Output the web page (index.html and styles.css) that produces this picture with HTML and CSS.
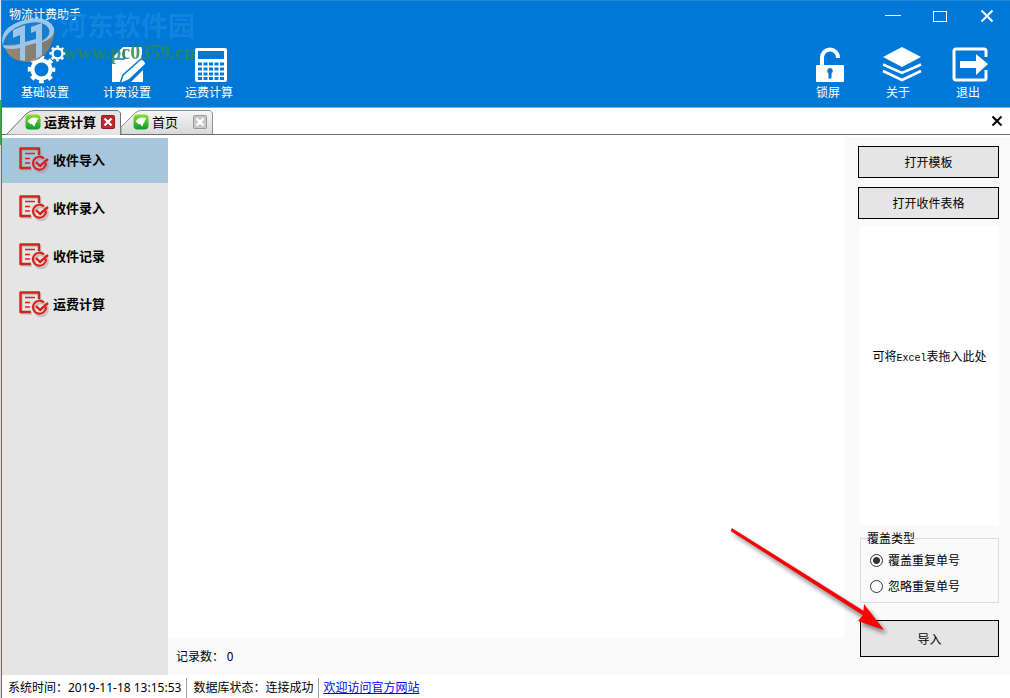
FILE: index.html
```html
<!DOCTYPE html>
<html lang="zh-CN">
<head>
<meta charset="utf-8">
<title>物流计费助手</title>
<link rel="stylesheet" href="styles.css">
</head>
<body>
<svg class="defs" aria-hidden="true">
  <defs>
    <linearGradient id="leaf" x1="0" y1="0" x2="0" y2="1"><stop offset="0" stop-color="#8be02c"/><stop offset="1" stop-color="#0a9a2a"/></linearGradient>
    <linearGradient id="idle" x1="0" y1="0" x2="0" y2="1"><stop offset="0" stop-color="#f6f6f6"/><stop offset="1" stop-color="#d9d9d9"/></linearGradient>
    <linearGradient id="brown" x1="0" y1="0" x2="1" y2="0"><stop offset="0" stop-color="#b98a5c"/><stop offset="1" stop-color="#8b7a66"/></linearGradient>
    <filter id="soft" x="-20%" y="-20%" width="140%" height="140%"><feGaussianBlur stdDeviation="2"/></filter>
    <symbol id="tab-icon" viewBox="0 0 16 16">
      <rect x="0.5" y="0.5" width="15" height="15" rx="4" fill="url(#leaf)"/>
      <path d="M2.500 7.500Q5 3.500 9 3.500Q12 3.500 13.500 4.500Q11.500 6 11.500 8Q10 9 9.500 12.500Q7.500 11 7 10H5Q4.500 8 2.500 7.500Z" fill="#fff"/>
    </symbol>
    <symbol id="form-icon" viewBox="0 0 32 28">
      <g fill="none" stroke-linejoin="round">
        <g stroke="#9a8a8a" stroke-opacity=".4" stroke-width="2.500" transform="translate(1 1.500)"><path d="M13 22H2.500V2.500H21V9"/><circle cx="22" cy="18" r="6.500"/></g>
        <path d="M13 22H2.500V2.500H21V9" stroke="#d8201f" stroke-width="2.400"/>
        <path d="M7 7.500H17M7 12.500H12M7 17H12" stroke="#d8201f" stroke-width="1.600"/>
        <path d="M26 12.500A6.500 6.500 0 1 0 28 17" stroke="#d8201f" stroke-width="2.200"/>
        <path d="M18 16L22 20L30 13" stroke="#d8201f" stroke-width="2.400"/>
      </g>
    </symbol>
  </defs>
</svg>
<div class="edge"></div>
<div class="app">
  <header class="header">
    <div class="titlebar">
      <h1 class="title">物流计费助手</h1>
      <div class="winctl">
        <button class="winbtn" aria-label="最小化"><svg width="16" height="16"><path d="M0 7.500H16" stroke="#fff"/></svg></button>
        <button class="winbtn" aria-label="最大化"><svg width="16" height="16"><rect x="1.500" y="3.500" width="13" height="10" fill="none" stroke="#fff"/></svg></button>
        <button class="winbtn" aria-label="关闭"><svg width="16" height="16"><path d="M2.500 2.500L13.500 13.500M13.500 2.500L2.500 13.500" stroke="#fff" stroke-width="2"/></svg></button>
      </div>
    </div>
    <nav class="toolbar">
      <button class="tool">
        <svg width="40" height="40" viewBox="0 0 40 40" fill="none" stroke="#fff">
          <circle cx="16.500" cy="25.500" r="9" stroke-width="4"/>
          <circle cx="16.500" cy="25.500" r="12" stroke-width="3.500" stroke-dasharray="4.700 4.725" stroke-dashoffset="2.350"/>
          <circle cx="32.500" cy="9.500" r="5" stroke-width="2.500"/>
          <circle cx="32.500" cy="9.500" r="7" stroke-width="2" stroke-dasharray="2.700 2.798" stroke-dashoffset="1.350"/>
        </svg>
        <span>基础设置</span>
      </button>
      <button class="tool">
        <svg width="40" height="40" viewBox="0 0 40 40">
          <path d="M16 3H35V19L14 38H5V14Z" fill="#fff"/><path d="M17 5V15H7" fill="none" stroke="#0078d7" stroke-width="1.500"/>
          <path d="M13 40L16 31L34 15Q38 16 39 20L22 36Z" fill="#fff" stroke="#0078d7" stroke-width="1.500"/><path d="M36 26V38H24Z" fill="#fff"/>
        </svg>
        <span>计费设置</span>
      </button>
      <button class="tool">
        <svg width="40" height="40" viewBox="0 0 40 40">
          <rect x="6" y="4" width="32" height="34" rx="2" fill="#fff"/><rect x="9" y="7" width="26" height="8" fill="#0078d7"/>
          <path d="M9 20H35M9 25H35M9 30H35M9 34.500H35" stroke="#0078d7" stroke-width="3" stroke-dasharray="4 1.500"/>
        </svg>
        <span>运费计算</span>
      </button>
      <div class="spacer"></div>
      <button class="tool narrow">
        <svg width="40" height="40" viewBox="0 0 40 40">
          <path d="M14 22V13.500A8 8 0 0 1 30 13.500V14" fill="none" stroke="#fff" stroke-width="4"/>
          <rect x="8" y="21" width="28" height="17" rx="1" fill="#fff"/><path d="M22 24a3 3 0 0 1 1.500 5.500v5h-3v-5a3 3 0 0 1 1.500-5.500Z" fill="#0078d7"/>
        </svg>
        <span>锁屏</span>
      </button>
      <button class="tool narrow">
        <svg width="40" height="40" viewBox="0 0 40 40">
          <path d="M24 3L43 13L24 23L5 13Z" fill="#fff"/>
          <path d="M5 20.500L24 29L43 20.500M5 27L24 36L43 27" fill="none" stroke="#fff" stroke-width="2.500"/>
        </svg>
        <span>关于</span>
      </button>
      <button class="tool narrow">
        <svg width="40" height="40" viewBox="0 0 40 40">
          <path d="M38 13V7Q38 5 36 5H8Q6 5 6 7V34Q6 36 8 36H36Q38 36 38 34V26" fill="none" stroke="#fff" stroke-width="3"/>
          <path d="M12 17H28V10L40 20L28 31V24H12Z" fill="#fff"/>
        </svg>
        <span>退出</span>
      </button>
    </nav>
  </header>

  <div class="tabs">
    <div class="tab active">
      <svg class="shape" width="116" height="27"><path d="M0 26.500H.5L20 6Q24 2.500 28 2.500H112L114.500 5V27" fill="#e5e5e5" stroke="#6d6d6d"/></svg>
      <button class="tabname"><svg width="16" height="16"><use href="#tab-icon"/></svg><span>运费计算</span></button>
      <button class="tabclose" aria-label="关闭运费计算"><svg width="14" height="14"><rect x=".5" y=".5" width="13" height="13" rx="1" fill="#c0282d" stroke="#8c1c20"/><path d="M3.500 3.500L10.500 10.500M10.500 3.500L3.500 10.500" stroke="#fff" stroke-width="2.200"/></svg></button>
    </div>
    <div class="tab">
      <svg class="shape" width="92" height="27"><path d="M0 26V19L14 5Q17 2.500 20 2.500H89L91.500 5V26" fill="url(#idle)" stroke="#8f8f8f"/></svg>
      <button class="tabname"><svg width="16" height="16"><use href="#tab-icon"/></svg><span>首页</span></button>
      <button class="tabclose" aria-label="关闭首页"><svg width="14" height="14"><rect x=".5" y=".5" width="13" height="13" rx="1" fill="#c8c8c8" stroke="#999"/><path d="M3.500 3.500L10.500 10.500M10.500 3.500L3.500 10.500" stroke="#fff" stroke-width="2.200"/></svg></button>
    </div>
    <div class="spacer"></div>
    <button class="closeall" aria-label="关闭标签"><svg width="12" height="12"><path d="M1.500 1.500L10.500 10.500M10.500 1.500L1.500 10.500" stroke="#000" stroke-width="2"/></svg></button>
  </div>

  <main class="body">
    <nav class="sidebar">
      <button class="side selected"><svg width="32" height="28"><use href="#form-icon"/></svg><span>收件导入</span></button>
      <button class="side"><svg width="32" height="28"><use href="#form-icon"/></svg><span>收件录入</span></button>
      <button class="side"><svg width="32" height="28"><use href="#form-icon"/></svg><span>收件记录</span></button>
      <button class="side"><svg width="32" height="28"><use href="#form-icon"/></svg><span>运费计算</span></button>
    </nav>
    <section class="content">
      <div class="records"></div>
      <div class="count">记录数：&nbsp;0</div>
    </section>
    <aside class="panel">
      <button class="btn">打开模板</button>
      <button class="btn">打开收件表格</button>
      <div class="drop"><span>可将<span class="mono">Excel</span>表拖入此处</span></div>
      <fieldset class="group">
        <legend>覆盖类型</legend>
        <label><input type="radio" name="mode" checked>覆盖重复单号</label>
        <label><input type="radio" name="mode">忽略重复单号</label>
      </fieldset>
      <button class="btn import">导入</button>
    </aside>
  </main>

  <footer class="status">
    <span>系统时间：2019-11-18 13:15:53</span>
    <span>数据库状态：连接成功</span>
    <span><a href="#">欢迎访问官方网站</a></span>
  </footer>
</div>

<div class="watermark">
  <svg width="60" height="56" viewBox="0 0 60 56">
    <path d="M4 36Q8 52 27 53Q50 52 55 22Q44 34 4 36Z" fill="url(#brown)"/>
    <path d="M4 34Q6 16 24 12Q46 6 54 20Q50 31 30 34Q14 37 4 34Z" fill="#1b7fd0"/>
    <path d="M3 37Q-2 20 21 12Q47 4 54 19Q56 31 36 35Q52 29 49 20Q44 10 24 15Q4 22 3 37Z" fill="#b7d4ec"/>
    <path d="M13 21L25 16V52L20 51V26L13 29ZM31 18L42 14V46L36 50V22L31 24ZM3 36Q12 38 20 35V39Q12 41 4 39ZM25 33L36 30V34L25 37Z" fill="#b7d4ec"/>
  </svg>
  <div class="wmtext"><span class="wmname">河东软件园</span><span class="wmurl">www.pc0359.cn</span></div>
</div>
<svg class="arrow" width="170" height="120" viewBox="0 0 170 120" aria-hidden="true">
  <g fill="#000" opacity=".45" filter="url(#soft)" transform="translate(3 4)"><path d="M12 8L147 93L144 97L11 11Z"/><path d="M145 85L164 110L139 101Z"/></g>
  <path d="M12 8.500L145 92L143 95L11 11Z" fill="#f00" stroke="#d00000" stroke-width=".5"/><path d="M144 84L164 110L138 101L143 95Z" fill="#f00"/>
</svg>
</body>
</html>
```
FILE: styles.css
```css
* { box-sizing: border-box; }
body {
  margin: 0;
  height: 100vh;
  display: flex;
  position: relative;
  overflow: hidden;
  background: #fff;
  color: #000;
  font: 12px/16px "Noto Sans CJK SC", sans-serif;
}
button {
  font: inherit;
  color: inherit;
  border: 0;
  padding: 0;
  background: none;
}
svg { display: block; flex: none; overflow: visible; }
.defs { position: absolute; width: 0; height: 0; }
.spacer { flex: 1; }
.edge { width: 1px; background: linear-gradient(#d6e6f0 100px, #3fa64a 100px, #3fa64a 145px, #d8dde2 145px); }
.app {
  flex: 1;
  min-width: 0;
  display: flex;
  flex-direction: column;
  border-left: 1px solid #1c80d8;
}

.header {
  background: #0078d7;
  color: #fff;
  border-top: 1px solid #2a85da;
  border-bottom: 1px solid #8aa5bd;
}
.titlebar { display: flex; height: 30px; align-items: center; }
.title { margin: 0; padding: 0 0 4px 7px; flex: 1; font-size: 12px; font-weight: 400; }
.winctl { display: flex; }
.winbtn { width: 47px; height: 30px; display: grid; place-items: center; }
.toolbar { display: flex; padding: 13px 7px 7px 2px; }
.tool {
  width: 82px;
  display: flex;
  flex-direction: column;
  align-items: center;
}
.tool.narrow { width: 70px; }

.tabs {
  display: flex;
  height: 27px;
  padding-left: 4px;
  border-bottom: 1px solid #6d6d6d;
}
.tab {
  position: relative;
  display: flex;
  align-items: center;
  justify-content: space-between;
  width: 92px;
  height: 27px;
  padding: 1px 6px 0 12px;
}
.tab.active { width: 115px; padding-left: 19px; font-weight: 700; }
.shape { position: absolute; left: 0; top: 0; }
.tabname { position: relative; display: flex; align-items: center; gap: 3px; font-size: 13px; }
.tabclose { position: relative; }
.closeall { width: 26px; display: grid; place-items: center; }

.body { flex: 1; min-height: 0; display: flex; padding-top: 2px; }
.sidebar {
  width: 166px;
  margin-top: 1px;
  background: #e5e5e5;
  display: flex;
  flex-direction: column;
  gap: 3px;
}
.side {
  height: 45px;
  padding: 0 0 1px 16px;
  display: flex;
  align-items: center;
  gap: 3px;
  font-size: 13px;
  font-weight: 700;
}
.selected { background: #a7c6dc; }
.content { flex: 1; display: flex; flex-direction: column; }
.records { flex: 1; }
.count { height: 37px; padding: 10px 8px 0; background: #fafafa; }
.panel {
  width: 166px;
  padding: 9px 11px 18px 14px;
  background: #fafafa;
  display: flex;
  flex-direction: column;
}
.btn { height: 32px; border: 1px solid #000; background: #e5e5e5; margin-bottom: 9px; }
.drop { flex: 1; margin: -2px 0 0 2px; background: #fff; display: grid; place-items: center; padding-bottom: 37px; }
.mono { font: 10px/16px "Liberation Mono", monospace; }
.group {
  margin: 5px 0 17px 2px;
  padding: 6px 9px 8px;
  border: 1px solid #dcdcdc;
  display: flex;
  flex-direction: column;
  gap: 10px;
}
.group legend { margin-left: -3px; padding: 0; }
.group label { display: flex; align-items: center; gap: 5px; }
.group input {
  appearance: none;
  width: 13px;
  height: 13px;
  margin: 0;
  border: 1px solid #333;
  border-radius: 50%;
  background: #fff;
}
.group input:checked { background: radial-gradient(circle, #333 3px, #fff 4px); }
.import { height: 37px; margin: 0 0 0 2px; }

.status {
  display: flex;
  align-items: center;
  height: 23px;
  padding-top: 3px;
  font-family: "Noto Sans", "Noto Sans CJK SC", sans-serif;
}
.status span { height: 20px; line-height: 20px; padding: 0 5px 0 6px; border-right: 1px solid #a0a0a0; }
.status span:last-child { border: 0; padding-left: 4px; }
.status a { color: #00f; }

.watermark { position: absolute; left: 0; top: 9px; display: flex; opacity: .85; pointer-events: none; }
.wmtext { display: flex; flex-direction: column; }
.wmname { font-size: 27px; line-height: 32px; font-weight: 700; color: #1388e0; }
.wmurl { font: 700 20px/22px "Liberation Serif", serif; color: #2b8a5a; padding-left: 3px; }
.arrow { position: absolute; left: 720px; top: 520px; pointer-events: none; }
```
